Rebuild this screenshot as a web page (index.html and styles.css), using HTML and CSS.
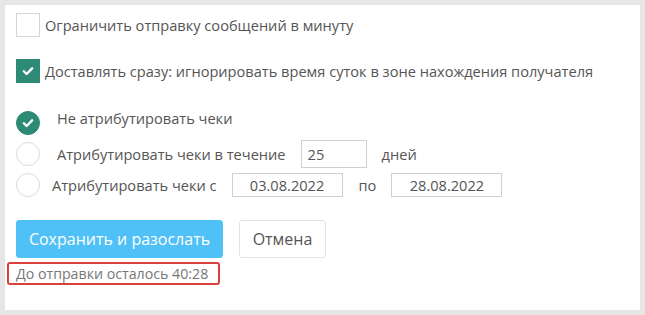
FILE: index.html
```html
<!DOCTYPE html>
<html lang="ru">
<head>
<meta charset="utf-8">
<link rel="stylesheet" href="styles.css">
</head>
<body>
<div class="panel">
  <label class="check-row">
    <span class="checkbox"></span>
    <span class="label">Ограничить отправку сообщений в минуту</span>
  </label>
  <label class="check-row row-2">
    <span class="checkbox checked">
      <svg viewBox="0 0 24 24" width="24" height="24"><path d="M7.5 12.3l3 3 6-6.2" fill="none" stroke="#fff" stroke-width="2.6" stroke-linecap="round" stroke-linejoin="round"/></svg>
    </span>
    <span class="label">Доставлять сразу: игнорировать время суток в зоне нахождения получателя</span>
  </label>

  <div class="radios">
    <div class="radio-row">
      <span class="radio checked">
        <svg viewBox="0 0 24 24" width="24" height="24"><path d="M7.5 12.3l3 3 6-6.2" fill="none" stroke="#fff" stroke-width="2.6" stroke-linecap="round" stroke-linejoin="round"/></svg>
      </span>
      <span class="label r-text r-first">Не атрибутировать чеки</span>
    </div>
    <div class="radio-row">
      <span class="radio"></span>
      <span class="label r-text">Атрибутировать чеки в течение</span>
      <span class="field days">25</span>
      <span class="label after">дней</span>
    </div>
    <div class="radio-row">
      <span class="radio"></span>
      <span class="label r-text r-narrow">Атрибутировать чеки с</span>
      <span class="field date">03.08.2022</span>
      <span class="label po">по</span>
      <span class="field date">28.08.2022</span>
    </div>
  </div>

  <div class="buttons">
    <button class="btn primary">Сохранить и разослать</button>
    <button class="btn secondary">Отмена</button>
  </div>
  <div class="status">До отправки осталось 40:28</div>
</div>
</body>
</html>
```
FILE: styles.css
```css
* { box-sizing: border-box; }
html, body { margin: 0; }
body {
  background: #e6e6e6;
  padding: 5px;
  font-family: "Open Sans", "Liberation Sans", sans-serif;
  color: #555;
}
.panel {
  background: #fff;
  width: 635px;
  height: 305px;
  padding: 8px 0 0 11px;
}
.check-row {
  display: flex;
  align-items: center;
  height: 24px;
}
.row-2 { margin-top: 22px; }
.checkbox {
  width: 24px;
  height: 24px;
  border: 1px solid #d6d6d6;
  background: #fff;
  flex: none;
  display: flex;
  align-items: center;
  justify-content: center;
}
.checkbox.checked {
  background: #2d8b75;
  border-color: #2d8b75;
}
.label {
  font-size: 14.6px;
  line-height: 20px;
  color: #555;
  white-space: nowrap;
}
.check-row .label { margin-left: 5px; }

.radios {
  margin-top: 26px;
  display: flex;
  flex-direction: column;
  gap: 3px;
}
.radio-row {
  display: flex;
  align-items: center;
  height: 28px;
}
.radio {
  width: 24px;
  height: 24px;
  border-radius: 50%;
  border: 1px solid #dcdcdc;
  flex: none;
  display: flex;
  align-items: center;
  justify-content: center;
}
.radio.checked {
  background: #2d8b75;
  border-color: #2d8b75;
}
.r-text { margin-left: 17px; }
.r-first { align-self: flex-start; line-height: 18px; }
.r-narrow { margin-left: 12px; }
.field {
  border: 1px solid #cfcfcf;
  font-size: 14.6px;
  color: #555;
  display: flex;
  align-items: center;
}
.days {
  width: 66px;
  height: 28px;
  margin-left: 15px;
  padding-left: 6px;
}
.after { margin-left: 15px; }
.date {
  width: 111px;
  height: 24px;
  justify-content: center;
}
.r-narrow + .date { margin-left: 15px; }
.po { margin-left: 16px; margin-right: 15px; }

.buttons {
  display: flex;
  gap: 16px;
  margin-top: 21px;
}
.btn {
  height: 38px;
  font-family: "Open Sans", "Liberation Sans", sans-serif;
  font-size: 16px;
  border-radius: 3px;
  padding: 0;
  white-space: nowrap;
}
.primary {
  width: 207px;
  background: #4fc1f6;
  border: 1px solid #4fc1f6;
  color: #fff;
}
.secondary {
  width: 87px;
  background: #fff;
  border: 1px solid #e3e3e3;
  color: #555;
}
.status {
  margin-top: 4px;
  margin-left: -9px;
  width: 213px;
  height: 23px;
  border: 2px solid #d9403b;
  border-radius: 3px;
  padding-left: 7px;
  font-size: 14.2px;
  line-height: 19px;
  color: #777;
  white-space: nowrap;
}
```
